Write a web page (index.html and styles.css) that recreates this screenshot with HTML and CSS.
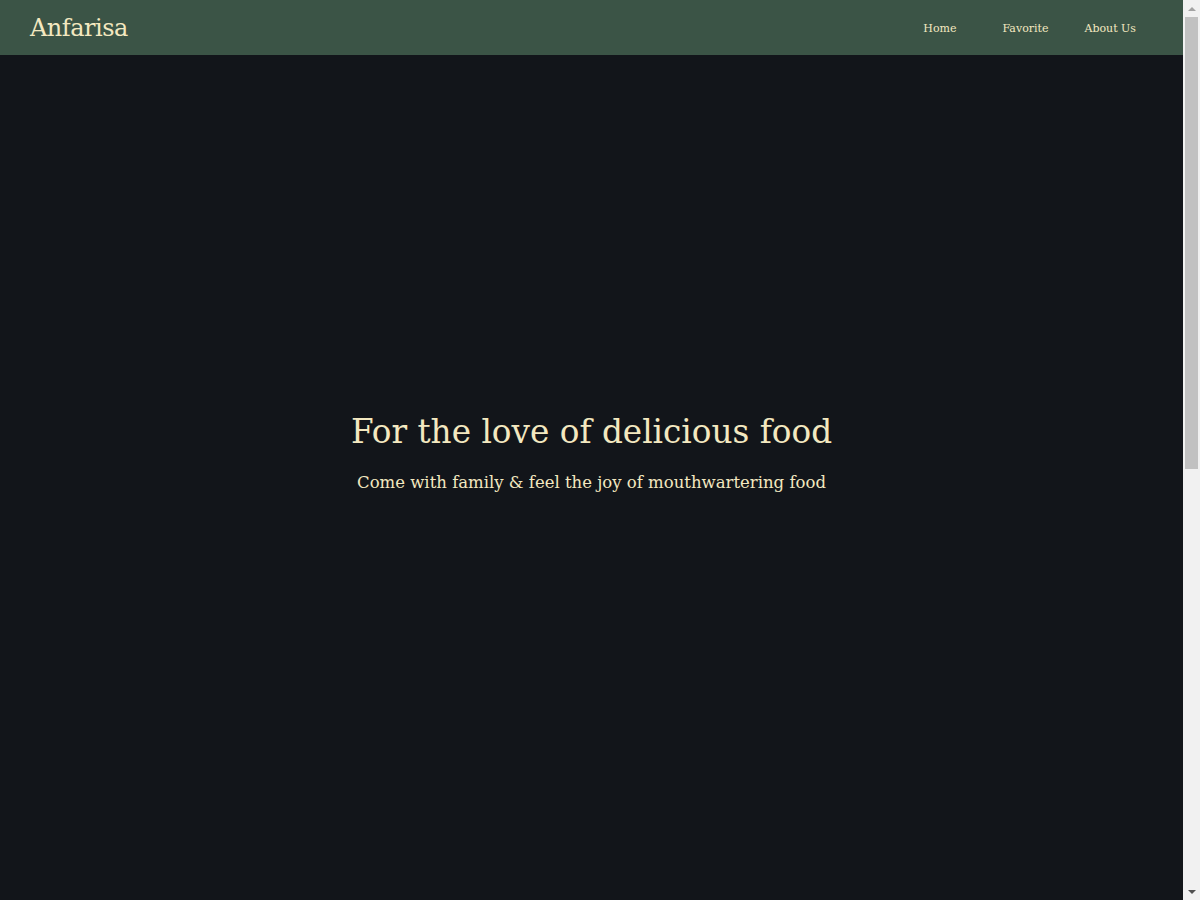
FILE: index.html
```html
<!DOCTYPE html>
<html lang="en">
<head>
<meta charset="utf-8">
<title>Anfarisa</title>
<link rel="stylesheet" href="styles.css">
</head>
<body>
<div class="page">
  <header class="topbar">
    <div class="logo">Anfarisa</div>
    <nav class="nav">
      <a href="#" class="nav-link nav-home">Home</a>
      <a href="#" class="nav-link">Favorite</a>
      <a href="#" class="nav-link">About Us</a>
    </nav>
  </header>
  <main>
    <section class="hero">
      <h1 class="hero-title">For the love of delicious food</h1>
      <p class="hero-sub">Come with family &amp; feel the joy of mouthwartering food</p>
    </section>
    <section class="below"></section>
  </main>
</div>
<div class="scrollbar" aria-hidden="true">
  <div class="sb-btn"><span class="sb-arrow sb-up"></span></div>
  <div class="sb-track"><div class="sb-thumb"></div></div>
  <div class="sb-btn"><span class="sb-arrow sb-down"></span></div>
</div>
</body>
</html>
```
FILE: styles.css
```css
html, body {
  margin: 0;
  padding: 0;
}
body {
  background: #12151a;
  color: #f3e8c0;
  font-family: "DejaVu Serif", "Liberation Serif", serif;
}
.page {
  margin-right: 17px;
}
.topbar {
  height: 55px;
  background: #3b5446;
  display: flex;
  align-items: center;
  justify-content: space-between;
  padding: 0 47px 0 30px;
}
.logo {
  font-size: 24px;
  letter-spacing: -0.5px;
  padding-top: 1px;
}
.nav {
  display: flex;
  gap: 36px;
  padding-top: 1px;
}
.nav-link {
  color: #f3e8c0;
  text-decoration: none;
  font-size: 11px;
}
.nav-home {
  margin-right: 10px;
}
.hero {
  height: 794px;
  display: flex;
  flex-direction: column;
  align-items: center;
  justify-content: center;
}
.hero-title {
  margin: 0;
  font-weight: normal;
  font-size: 32.7px;
}
.hero-sub {
  margin: 22px 0 0;
  font-size: 16.5px;
}
.below {
  height: 875px;
}
.scrollbar {
  position: fixed;
  top: 0;
  right: 0;
  width: 17px;
  height: 100vh;
  background: #f1f1f1;
  display: flex;
  flex-direction: column;
}
.sb-btn {
  height: 17px;
  display: flex;
  align-items: center;
  justify-content: center;
}
.sb-track {
  flex: 1;
}
.sb-thumb {
  height: 452px;
  margin: 0 2px;
  background: #c1c1c1;
}
.sb-arrow {
  width: 0;
  height: 0;
  border-left: 4px solid transparent;
  border-right: 4px solid transparent;
}
.sb-up {
  border-bottom: 4px solid #a3a3a3;
}
.sb-down {
  border-top: 4px solid #505050;
}
```
